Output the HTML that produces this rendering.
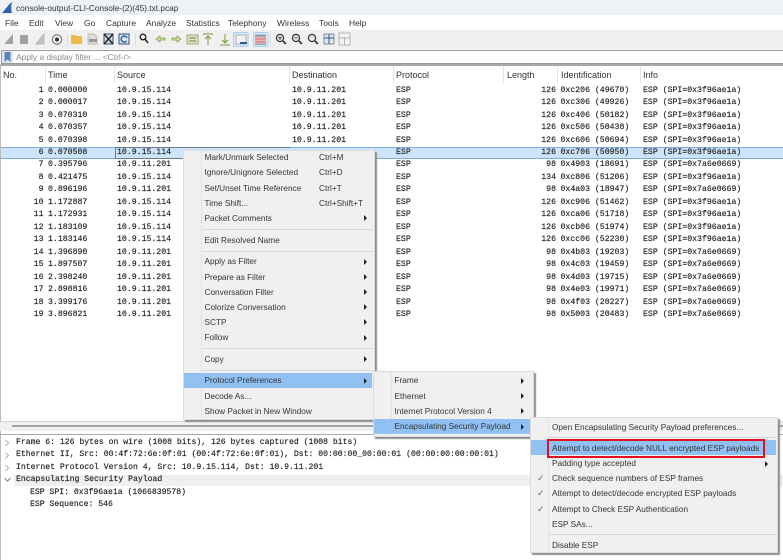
<!DOCTYPE html>
<html><head><meta charset="utf-8"><style>
html,body{margin:0;padding:0;background:#fff}
#p{position:relative;width:783px;height:560px;overflow:hidden;background:#fff;filter:blur(.25px);font-family:"Liberation Sans",sans-serif;font-size:8.6px;color:#222}
#p div,#p span,#p svg{position:absolute;white-space:pre}
.m span{top:14px;line-height:10px;font-size:8.45px;color:#333}
.h{top:70px;line-height:11px;font-size:9px;color:#333}
.s{top:66px;width:1px;height:17px;background:#e4e4e4}
.r{left:0;width:783px;height:12.47px;font:8.2px/12.47px "Liberation Mono",monospace;color:#222;-webkit-text-stroke:.15px #222}
.n{right:739.5px}.t{left:48px}.a{left:117px}.d{left:292px}.o{left:396px}.l{right:227px}.i{left:560.5px}.f{left:643px}
.box{background:#f0f0f0;border:1px solid #dcdcdc;box-shadow:2px 2px 1px #8e8e8e;box-sizing:border-box}
.it{line-height:12px;height:12px;margin-top:.7px;font-size:8.25px;color:#333}
.sp{height:1px;background:#d8d8d8}
.hl{background:#91c1f2}
.ar{width:0;height:0;border-left:3.5px solid #222;border-top:3px solid transparent;border-bottom:3px solid transparent}
.dl{left:16px;height:12.47px;font:8.15px/12.47px "Liberation Mono",monospace;color:#222;-webkit-text-stroke:.15px #222}
.ck{left:537px;font-size:9px;color:#666;line-height:12px}
</style></head><body><div id="p">

<div style="left:0;top:0;width:783px;height:15px;background:#eef2f7"></div>
<svg style="left:1px;top:1px" width="12" height="13" viewBox="0 0 12 13"><path d="M1 12C4 9 6 5 11 1C10 5 10 9 11 12Z" fill="#2f62ad"/></svg>
<div style="left:16px;top:2px;line-height:12px;font-size:8.3px;color:#333">console-output-CLI-Console-(2)(45).txt.pcap</div>

<div class="m" style="left:0;top:4px;width:783px;height:26px">
<span style="left:5px">File</span><span style="left:29px">Edit</span><span style="left:55px">View</span><span style="left:84px">Go</span><span style="left:106px">Capture</span><span style="left:146px">Analyze</span><span style="left:186px">Statistics</span><span style="left:228px">Telephony</span><span style="left:277px">Wireless</span><span style="left:319px">Tools</span><span style="left:349px">Help</span>
</div>

<div style="left:0;top:30px;width:783px;height:19px;background:#f0f0f0"></div>
<svg style="left:0;top:30px" width="360" height="19" viewBox="0 0 360 19">
<path d="M4 14L13 4V14Z" fill="#a3a3a3"/>
<rect x="20" y="5" width="8" height="9" fill="#a0a0a0"/>
<path d="M36 14L44 4V14Z" fill="#c4c4c4" stroke="#aaa" stroke-width=".7"/>
<circle cx="57" cy="9.500" r="4.700" fill="#eee" stroke="#666"/><circle cx="57" cy="9.500" r="2" fill="#333"/>
<rect x="67" y="3" width="1" height="13" fill="#ddd"/>
<path d="M71 5h4l1 1h6v8H71Z" fill="#eebb44"/>
<path d="M88 4h6l3 3v7H88Z" fill="#ddd" stroke="#aaa" stroke-width=".7"/><rect x="89" y="9" width="8" height="3" fill="#999"/>
<rect x="104" y="4" width="9" height="10" fill="#cfdbe8" stroke="#33526e"/><path d="M104 4l9 10M113 4l-9 10" stroke="#222" stroke-width="1.400"/>
<rect x="119" y="4" width="10" height="10" fill="#dbe6f2" stroke="#33526e"/><path d="M127 8a3 3 0 1 0-.5 3" fill="none" stroke="#2a6cc0" stroke-width="1.600"/>
<rect x="135" y="3" width="1" height="13" fill="#ddd"/>
<circle cx="143" cy="7" r="2.800" fill="#eee" stroke="#222" stroke-width="1.300"/><path d="M145 9l3 4" stroke="#222" stroke-width="1.500"/>
<path d="M156 9l4-3v2h5v2h-5v2Z" fill="#cfe3a0" stroke="#7d9b42" stroke-width=".7"/>
<path d="M181 9l-4-3v2h-5v2h5v2Z" fill="#cfe3a0" stroke="#7d9b42" stroke-width=".7"/>
<rect x="187" y="5" width="11" height="9" fill="#dde4c4" stroke="#7d8a5a" stroke-width=".7"/><path d="M189 8h7M189 11h7" stroke="#6a8a3a"/>
<path d="M203 4h10M208 15V7M205 9l3-3 3 3" fill="#cfe3a0" stroke="#7d9b42"/>
<path d="M220 15h10M225 4v8M222 10l3 3 3-3" fill="#cfe3a0" stroke="#7d9b42"/>
<rect x="233.500" y="2.500" width="14.500" height="14" rx="1.500" fill="#dbeaf8" stroke="#a8d0f0"/>
<rect x="236" y="5" width="10" height="9" fill="#f2f2f2" stroke="#888" stroke-width=".6"/><rect x="240" y="12" width="7" height="2" fill="#2a5a9c"/>
<rect x="253.500" y="2.500" width="14.500" height="14" rx="1.500" fill="#dbeaf8" stroke="#a8d0f0"/>
<rect x="255" y="4.500" width="11" height="2.400" fill="#99a"/><rect x="255" y="7.500" width="11" height="2.400" fill="#e88a88"/><rect x="255" y="10.500" width="11" height="2.400" fill="#e88a88"/><rect x="255" y="13.500" width="11" height="1.500" fill="#99a"/>
<rect x="270" y="3" width="1" height="13" fill="#ddd"/>
<g fill="#e6eef0" stroke="#333" stroke-width="1.200"><circle cx="280" cy="8" r="3.600"/><circle cx="296" cy="8" r="3.600"/><circle cx="312" cy="8" r="3.600"/></g>
<path d="M283 11l3 3M299 11l3 3M315 11l3 3" stroke="#333" stroke-width="1.700"/>
<path d="M278 8h4M280 6v4M294 8h4" stroke="#333" stroke-width=".8"/>
<rect x="324" y="4" width="10" height="10" fill="#dde6ee" stroke="#5a6a7a" stroke-width=".7"/><path d="M324 8h10M329 4v10" stroke="#2a5a9c"/>
<rect x="339" y="3" width="11" height="12" fill="#f4f4f4" stroke="#999" stroke-width=".7"/><path d="M339 8h11M344.500 8v7" stroke="#999" stroke-width=".7"/>
</svg>

<div style="left:1px;top:49.500px;width:782px;height:14px;border:1px solid #9a9a9a;border-right:0;box-sizing:border-box;background:#fff"></div>
<div style="left:2px;top:50.500px;width:11px;height:12px;background:#dce6f2"></div>
<svg style="left:4px;top:51.500px" width="7" height="10"><path d="M.5 0h6v10l-3-2.500L.5 10Z" fill="#5b84b8"/></svg>
<div style="left:16px;top:52px;line-height:10px;font-size:8.450px;color:#8a8a8a">Apply a display filter ... &lt;Ctrl-/&gt;</div>

<div style="left:0;top:64px;width:783px;height:1.500px;background:#a8a8a8"></div>
<div style="left:0;top:64px;width:1px;height:496px;background:#bbb"></div>
<div class="s" style="left:45px"></div><div class="s" style="left:114px"></div><div class="s" style="left:289px"></div><div class="s" style="left:393px"></div><div class="s" style="left:503px"></div><div class="s" style="left:557px"></div><div class="s" style="left:640px"></div>
<div class="h" style="left:3px">No.</div><div class="h" style="left:48px">Time</div><div class="h" style="left:117px">Source</div><div class="h" style="left:292px">Destination</div><div class="h" style="left:396px">Protocol</div><div class="h" style="left:507px">Length</div><div class="h" style="left:561px">Identification</div><div class="h" style="left:643px">Info</div>

<div class="r" style="top:84.600px"><span class="n">1</span><span class="t">0.000000</span><span class="a">10.9.15.114</span><span class="d">10.9.11.201</span><span class="o">ESP</span><span class="l">126</span><span class="i">0xc206 (49670)</span><span class="f">ESP (SPI=0x3f96ae1a)</span></div>
<div class="r" style="top:97.100px"><span class="n">2</span><span class="t">0.000017</span><span class="a">10.9.15.114</span><span class="d">10.9.11.201</span><span class="o">ESP</span><span class="l">126</span><span class="i">0xc306 (49926)</span><span class="f">ESP (SPI=0x3f96ae1a)</span></div>
<div class="r" style="top:109.500px"><span class="n">3</span><span class="t">0.070310</span><span class="a">10.9.15.114</span><span class="d">10.9.11.201</span><span class="o">ESP</span><span class="l">126</span><span class="i">0xc406 (50182)</span><span class="f">ESP (SPI=0x3f96ae1a)</span></div>
<div class="r" style="top:122px"><span class="n">4</span><span class="t">0.070357</span><span class="a">10.9.15.114</span><span class="d">10.9.11.201</span><span class="o">ESP</span><span class="l">126</span><span class="i">0xc506 (50438)</span><span class="f">ESP (SPI=0x3f96ae1a)</span></div>
<div class="r" style="top:134.500px"><span class="n">5</span><span class="t">0.070398</span><span class="a">10.9.15.114</span><span class="d">10.9.11.201</span><span class="o">ESP</span><span class="l">126</span><span class="i">0xc606 (50694)</span><span class="f">ESP (SPI=0x3f96ae1a)</span></div>

<div style="left:1px;top:146.500px;width:782px;height:12.500px;background:#cde4fa;border-top:1px solid #79ade6;border-bottom:1px solid #79ade6;box-sizing:border-box"></div>
<div style="left:115px;top:146.500px;width:175px;height:12.500px;border:1px solid #6a7a8a;border-right:0;box-sizing:border-box"></div>
<div class="r" style="top:146.900px"><span class="n">6</span><span class="t">0.070508</span><span class="a">10.9.15.114</span><span class="o">ESP</span><span class="l">126</span><span class="i">0xc706 (50950)</span><span class="f">ESP (SPI=0x3f96ae1a)</span></div>
<div class="r" style="top:159.400px"><span class="n">7</span><span class="t">0.395796</span><span class="a">10.9.11.201</span><span class="o">ESP</span><span class="l">98</span><span class="i">0x4903 (18691)</span><span class="f">ESP (SPI=0x7a6e0669)</span></div>
<div class="r" style="top:171.900px"><span class="n">8</span><span class="t">0.421475</span><span class="a">10.9.15.114</span><span class="o">ESP</span><span class="l">134</span><span class="i">0xc806 (51206)</span><span class="f">ESP (SPI=0x3f96ae1a)</span></div>
<div class="r" style="top:184.300px"><span class="n">9</span><span class="t">0.896196</span><span class="a">10.9.11.201</span><span class="o">ESP</span><span class="l">98</span><span class="i">0x4a03 (18947)</span><span class="f">ESP (SPI=0x7a6e0669)</span></div>
<div class="r" style="top:196.800px"><span class="n">10</span><span class="t">1.172887</span><span class="a">10.9.15.114</span><span class="o">ESP</span><span class="l">126</span><span class="i">0xc906 (51462)</span><span class="f">ESP (SPI=0x3f96ae1a)</span></div>
<div class="r" style="top:209.300px"><span class="n">11</span><span class="t">1.172931</span><span class="a">10.9.15.114</span><span class="o">ESP</span><span class="l">126</span><span class="i">0xca06 (51718)</span><span class="f">ESP (SPI=0x3f96ae1a)</span></div>
<div class="r" style="top:221.700px"><span class="n">12</span><span class="t">1.183109</span><span class="a">10.9.15.114</span><span class="o">ESP</span><span class="l">126</span><span class="i">0xcb06 (51974)</span><span class="f">ESP (SPI=0x3f96ae1a)</span></div>
<div class="r" style="top:234.200px"><span class="n">13</span><span class="t">1.183146</span><span class="a">10.9.15.114</span><span class="o">ESP</span><span class="l">126</span><span class="i">0xcc06 (52230)</span><span class="f">ESP (SPI=0x3f96ae1a)</span></div>
<div class="r" style="top:246.700px"><span class="n">14</span><span class="t">1.396890</span><span class="a">10.9.11.201</span><span class="o">ESP</span><span class="l">98</span><span class="i">0x4b03 (19203)</span><span class="f">ESP (SPI=0x7a6e0669)</span></div>
<div class="r" style="top:259.200px"><span class="n">15</span><span class="t">1.897507</span><span class="a">10.9.11.201</span><span class="o">ESP</span><span class="l">98</span><span class="i">0x4c03 (19459)</span><span class="f">ESP (SPI=0x7a6e0669)</span></div>
<div class="r" style="top:271.600px"><span class="n">16</span><span class="t">2.398240</span><span class="a">10.9.11.201</span><span class="o">ESP</span><span class="l">98</span><span class="i">0x4d03 (19715)</span><span class="f">ESP (SPI=0x7a6e0669)</span></div>
<div class="r" style="top:284.100px"><span class="n">17</span><span class="t">2.898816</span><span class="a">10.9.11.201</span><span class="o">ESP</span><span class="l">98</span><span class="i">0x4e03 (19971)</span><span class="f">ESP (SPI=0x7a6e0669)</span></div>
<div class="r" style="top:296.600px"><span class="n">18</span><span class="t">3.399176</span><span class="a">10.9.11.201</span><span class="o">ESP</span><span class="l">98</span><span class="i">0x4f03 (20227)</span><span class="f">ESP (SPI=0x7a6e0669)</span></div>
<div class="r" style="top:309.100px"><span class="n">19</span><span class="t">3.896821</span><span class="a">10.9.11.201</span><span class="o">ESP</span><span class="l">98</span><span class="i">0x5003 (20483)</span><span class="f">ESP (SPI=0x7a6e0669)</span></div>

<div style="left:0;top:420.500px;width:783px;height:1px;background:#d4d4d4"></div>
<div style="left:0;top:421.500px;width:783px;height:9.500px;background:#f0f0f0"></div>
<div style="left:12px;top:424.500px;width:771px;height:2.500px;background:#a4a4a4"></div>
<div style="left:0;top:433.500px;width:783px;height:1.500px;background:#a8a8a8"></div>
<div style="left:14px;top:474.500px;width:769px;height:11.500px;background:#efefef"></div>
<svg style="left:3px;top:438px" width="10" height="50" fill="none" stroke="#999" stroke-width=".8"><path d="M2.500 2l3 3-3 3M2.500 14.500l3 3-3 3M2.500 27l3 3-3 3"/><path d="M1.500 40l3 3 3-3" stroke="#555"/></svg>
<div class="dl" style="top:436.600px">Frame 6: 126 bytes on wire (1008 bits), 126 bytes captured (1008 bits)</div>
<div class="dl" style="top:449.100px">Ethernet II, Src: 00:4f:72:6e:0f:01 (00:4f:72:6e:0f:01), Dst: 00:00:00_00:00:01 (00:00:00:00:00:01)</div>
<div class="dl" style="top:461.600px">Internet Protocol Version 4, Src: 10.9.15.114, Dst: 10.9.11.201</div>
<div class="dl" style="top:474.100px">Encapsulating Security Payload</div>
<div class="dl" style="top:486.600px;left:30px">ESP SPI: 0x3f96ae1a (1066839578)</div>
<div class="dl" style="top:499.100px;left:30px">ESP Sequence: 546</div>

<div class="box" style="left:183px;top:150px;width:192px;height:270px"></div>
<div style="left:201px;top:151px;width:1px;height:268px;background:#e2e2e2"></div>
<div class="it" style="left:204.500px;top:151px">Mark/Unmark Selected</div><div class="it" style="left:319px;top:151px">Ctrl+M</div>
<div class="it" style="left:204.500px;top:166.500px">Ignore/Unignore Selected</div><div class="it" style="left:319px;top:166.500px">Ctrl+D</div>
<div class="it" style="left:204.500px;top:182px">Set/Unset Time Reference</div><div class="it" style="left:319px;top:182px">Ctrl+T</div>
<div class="it" style="left:204.500px;top:197px">Time Shift...</div><div class="it" style="left:319px;top:197px">Ctrl+Shift+T</div>
<div class="it" style="left:204.500px;top:212px">Packet Comments</div><div class="ar" style="left:364px;top:215px"></div>
<div class="sp" style="left:202px;top:228.500px;width:171px"></div>
<div class="it" style="left:204.500px;top:234px">Edit Resolved Name</div>
<div class="sp" style="left:202px;top:250.500px;width:171px"></div>
<div class="it" style="left:204.500px;top:255.500px">Apply as Filter</div><div class="ar" style="left:364px;top:258.500px"></div>
<div class="it" style="left:204.500px;top:271px">Prepare as Filter</div><div class="ar" style="left:364px;top:274px"></div>
<div class="it" style="left:204.500px;top:286px">Conversation Filter</div><div class="ar" style="left:364px;top:289px"></div>
<div class="it" style="left:204.500px;top:301px">Colorize Conversation</div><div class="ar" style="left:364px;top:304px"></div>
<div class="it" style="left:204.500px;top:316px">SCTP</div><div class="ar" style="left:364px;top:319px"></div>
<div class="it" style="left:204.500px;top:331.500px">Follow</div><div class="ar" style="left:364px;top:334.500px"></div>
<div class="sp" style="left:202px;top:348px;width:171px"></div>
<div class="it" style="left:204.500px;top:353px">Copy</div><div class="ar" style="left:364px;top:356px"></div>
<div class="sp" style="left:202px;top:369.500px;width:171px"></div>
<div class="hl" style="left:184px;top:373px;width:188px;height:15px"></div>
<div class="it" style="left:204.500px;top:374.500px">Protocol Preferences</div><div class="ar" style="left:364px;top:377.500px"></div>
<div class="it" style="left:204.500px;top:390px">Decode As...</div>
<div class="it" style="left:204.500px;top:405px">Show Packet in New Window</div>

<div class="box" style="left:373px;top:371px;width:161px;height:66px"></div>
<div style="left:391px;top:372px;width:1px;height:64px;background:#e2e2e2"></div>
<div class="it" style="left:394.500px;top:374.500px">Frame</div><div class="ar" style="left:521px;top:377.500px"></div>
<div class="it" style="left:394.500px;top:390px">Ethernet</div><div class="ar" style="left:521px;top:393px"></div>
<div class="it" style="left:394.500px;top:405px">Internet Protocol Version 4</div><div class="ar" style="left:521px;top:408px"></div>
<div class="hl" style="left:374px;top:419px;width:156px;height:15px"></div>
<div class="it" style="left:394.500px;top:420.500px">Encapsulating Security Payload</div><div class="ar" style="left:521px;top:423.500px"></div>

<div class="box" style="left:530px;top:417px;width:248px;height:136px"></div>
<div style="left:548px;top:418px;width:1px;height:134px;background:#e2e2e2"></div>
<div class="it" style="left:552px;top:421px">Open Encapsulating Security Payload preferences...</div>
<div class="sp" style="left:549px;top:437px;width:227px"></div>
<div class="hl" style="left:531px;top:440px;width:245px;height:15px"></div>
<div style="left:547px;top:438.500px;width:218px;height:19px;border:2.500px solid #e01020;box-sizing:border-box"></div>
<div class="it" style="left:552px;top:442px">Attempt to detect/decode NULL encrypted ESP payloads</div>
<div class="it" style="left:552px;top:457.500px">Padding type accepted</div><div class="ar" style="left:765px;top:460.500px"></div>
<div class="ck" style="top:472px">✓</div><div class="it" style="left:552px;top:472.500px">Check sequence numbers of ESP frames</div>
<div class="ck" style="top:487px">✓</div><div class="it" style="left:552px;top:487.500px">Attempt to detect/decode encrypted ESP payloads</div>
<div class="ck" style="top:502.500px">✓</div><div class="it" style="left:552px;top:503px">Attempt to Check ESP Authentication</div>
<div class="it" style="left:552px;top:518px">ESP SAs...</div>
<div class="sp" style="left:549px;top:534px;width:227px"></div>
<div class="it" style="left:552px;top:539px">Disable ESP</div>

</div></body></html>
